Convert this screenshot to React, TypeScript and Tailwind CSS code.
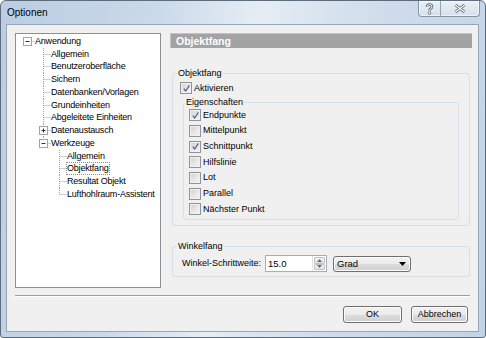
import React from "react";

type Node = { label: string; level: number; box?: "plus" | "minus"; last?: boolean; focus?: boolean };

const tree: Node[] = [
  { label: "Anwendung", level: 0, box: "minus", last: true },
  { label: "Allgemein", level: 1 },
  { label: "Benutzeroberfläche", level: 1 },
  { label: "Sichern", level: 1 },
  { label: "Datenbanken/Vorlagen", level: 1 },
  { label: "Grundeinheiten", level: 1 },
  { label: "Abgeleitete Einheiten", level: 1 },
  { label: "Datenaustausch", level: 1, box: "plus" },
  { label: "Werkzeuge", level: 1, box: "minus", last: true },
  { label: "Allgemein", level: 2 },
  { label: "Objektfang", level: 2, focus: true },
  { label: "Resultat Objekt", level: 2 },
  { label: "Lufthohlraum-Assistent", level: 2, last: true },
];

const props = [
  { label: "Endpunkte", checked: true },
  { label: "Mittelpunkt" },
  { label: "Schnittpunkt", checked: true },
  { label: "Hilfslinie" },
  { label: "Lot" },
  { label: "Parallel" },
  { label: "Nächster Punkt" },
];

// connector lines + expand box for one tree row
function Gutter({ node }: { node: Node }) {
  const w = 19 + 16 * node.level;
  const cx = 11.5 + 16 * node.level;
  const cy = 6.5;
  return (
    <svg width={w} height="13" viewBox={`0 0 ${w} 13`} className="shrink-0">
      {node.level > 0 && (
        <line x1={cx} y1="0" x2={cx} y2={node.last ? cy : 13} stroke="#a0a0a0" strokeDasharray="1 1" />
      )}
      <line x1={cx} y1={cy} x2={cx + 7} y2={cy} stroke="#a0a0a0" strokeDasharray="1 1" />
      {node.box && (
        <g>
          <rect x={cx - 4} y={cy - 4} width="8" height="8" fill="#fff" stroke="#a3a3a3" />
          <line x1={cx - 2} y1={cy} x2={cx + 2} y2={cy} stroke="#333" />
          {node.box === "plus" && <line x1={cx} y1={cy - 2} x2={cx} y2={cy + 2} stroke="#333" />}
        </g>
      )}
    </svg>
  );
}

function Check({ checked }: { checked?: boolean }) {
  return (
    <span className="flex h-[12px] w-[12px] shrink-0 items-center justify-center border border-[#939393] bg-[linear-gradient(135deg,#d2d2d2,#f6f6f6)] shadow-[inset_0_0_0_1px_#f0f0f0]">
      {checked && (
        <svg width="9" height="9" viewBox="0 0 9 9">
          <path d="M1.8 4.6 L3.7 7 L7.4 1.4" fill="none" stroke="#4c6594" strokeWidth="1.25" />
        </svg>
      )}
    </span>
  );
}

function Btn({ label }: { label: string }) {
  return (
    <button className="flex h-[17px] w-full items-center justify-center rounded-[3px] border border-[#707070] bg-[linear-gradient(#f2f2f2_0%,#ebebeb_50%,#dddddd_51%,#cfcfcf_100%)] text-[9px] text-black shadow-[inset_0_0_0_1px_#fcfcfc]">
      {label}
    </button>
  );
}

export default function App() {
  return (
    <div className="flex h-[338px] w-[486px] flex-col overflow-hidden rounded-t-[6px] rounded-b-[3px] border border-[#5d6d7e] bg-[linear-gradient(100deg,#bacde2_0%,#cbdaea_30%,#e6edf5_48%,#d2dfec_66%,#c1d3e7_100%)] font-['Liberation_Sans',Arial,sans-serif] text-black">
      <div className="flex h-[23px] shrink-0 items-start justify-between">
        <span className="pl-[6px] pt-[6px] text-[10px] leading-[11px]">Optionen</span>
        <div className="mr-[5px] flex h-[16px] rounded-b-[4px] border border-t-0 border-[#8593a2] bg-[linear-gradient(#eaf0f6,#d6e0ea)] shadow-[inset_0_0_0_1px_rgba(255,255,255,0.6)]">
          <div className="flex w-[22px] items-center justify-center border-r border-[#97a3b0]">
            <svg width="9" height="12" viewBox="0 0 9 12">
              <path d="M2 4 Q2 1.5 4.5 1.5 Q7 1.5 7 3.8 Q7 5.2 5 6.2 L4.5 8" fill="none" stroke="#56636f" strokeWidth="2.6" />
              <path d="M2 4 Q2 1.5 4.5 1.5 Q7 1.5 7 3.8 Q7 5.2 5 6.2 L4.5 8" fill="none" stroke="#fff" strokeWidth="1" />
              <circle cx="4.5" cy="10.2" r="1.3" fill="#fff" stroke="#56636f" strokeWidth="0.8" />
            </svg>
          </div>
          <div className="flex w-[38px] items-center justify-center">
            <svg width="12" height="9" viewBox="0 0 12 9">
              <path d="M1.5 1 L10.5 8 M10.5 1 L1.5 8" fill="none" stroke="#56636f" strokeWidth="2.8" />
              <path d="M1.5 1 L10.5 8 M10.5 1 L1.5 8" fill="none" stroke="#fff" strokeWidth="1.1" />
            </svg>
          </div>
        </div>
      </div>

      <div className="mb-[5px] ml-[5px] mr-[6px] flex flex-1 flex-col border border-[#97a6b6] bg-[#f0f0f0] pt-[8px] text-[9px] leading-[11px]">
        <div className="flex h-[255px] pl-[8px] pr-[6px]">
          <div className="h-full w-[146px] shrink-0 border border-[#8b9097] bg-white pt-[1px] tracking-[-0.2px]">
            {tree.map((n, i) => (
              <div key={i} className="flex h-[12.75px] items-center">
                <Gutter node={n} />
                <span className={n.focus ? "outline outline-1 outline-dotted outline-[#909090]" : ""}>{n.label}</span>
              </div>
            ))}
          </div>

          <div className="ml-[9px] flex w-[302px] flex-col">
            <div className="h-[15px] border-l border-t border-[#c2c2c2] bg-[#a3a3a3] pl-[5px] text-[10.5px] font-bold leading-[14px] text-white">
              Objektfang
            </div>

            <fieldset className="ml-[2px] mt-[20px] w-[298px] rounded-[3px] border border-[#d5dfe5] pb-[5px] pl-[7px] pr-[10px] pt-[3px]">
              <legend className="ml-[-3px] px-[1px] leading-[11px]">Objektfang</legend>
              <label className="flex h-[12px] items-center gap-[2px]">
                <Check checked />
                <span>Aktivieren</span>
              </label>
              <fieldset className="ml-[3px] mt-[2.5px] rounded-[3px] border border-[#d5dfe5] pb-[2px] pl-[5px] pt-0">
                <legend className="ml-[-4px] px-[1px] leading-[11px]">Eigenschaften</legend>
                {props.map((p) => (
                  <label key={p.label} className="flex h-[15.67px] items-center gap-[2px]">
                    <Check checked={p.checked} />
                    <span>{p.label}</span>
                  </label>
                ))}
              </fieldset>
            </fieldset>

            <fieldset className="ml-[2px] mt-[15px] w-[298px] rounded-[3px] border border-[#d5dfe5] pb-[4px] pl-[9px] pt-[3px]">
              <legend className="ml-[-5px] px-[1px] leading-[11px]">Winkelfang</legend>
              <div className="flex h-[17px] items-center">
                <span className="w-[83px] shrink-0">Winkel-Schrittweite:</span>
                <div className="flex h-[17px] w-[62px] border border-[#abadb3] bg-white">
                  <span className="flex-1 pl-[2px] text-[9.5px] leading-[15px]">15.0</span>
                  <div className="flex w-[14px] flex-col border-l border-[#e3e3e3] p-[1px]">
                    <div className="flex flex-1 items-center justify-center rounded-[1px] border border-[#c0c4c9] bg-[linear-gradient(#f4f4f4,#e2e2e2)]">
                      <svg width="5" height="3" viewBox="0 0 5 3"><path d="M0 3 L2.5 0 L5 3 Z" fill="#6b6b6b" /></svg>
                    </div>
                    <div className="flex flex-1 items-center justify-center rounded-[1px] border border-[#c0c4c9] bg-[linear-gradient(#f4f4f4,#e2e2e2)]">
                      <svg width="5" height="3" viewBox="0 0 5 3"><path d="M0 0 L2.5 3 L5 0 Z" fill="#6b6b6b" /></svg>
                    </div>
                  </div>
                </div>
                <div className="ml-[6px] flex h-[16px] w-[78px] items-center justify-between rounded-[3px] border border-[#707070] bg-[linear-gradient(#f2f2f2_0%,#ebebeb_50%,#dddddd_51%,#cfcfcf_100%)] pl-[3px] pr-[4px] text-[9.5px] shadow-[inset_0_0_0_1px_#fcfcfc]">
                  <span>Grad</span>
                  <svg width="7" height="4" viewBox="0 0 7 4"><path d="M0 0 L7 0 L3.5 4 Z" fill="#000" /></svg>
                </div>
              </div>
            </fieldset>
          </div>
        </div>

        <div className="ml-[8px] mr-[8px] mt-[7px] h-[2px] border-b border-t border-b-white border-t-[#a0a0a0]" />

        <div className="mt-[9px] flex justify-end gap-[9px] pr-[10px]">
          <div className="w-[59px]"><Btn label="OK" /></div>
          <div className="w-[57px]"><Btn label="Abbrechen" /></div>
        </div>
      </div>
    </div>
  );
}
